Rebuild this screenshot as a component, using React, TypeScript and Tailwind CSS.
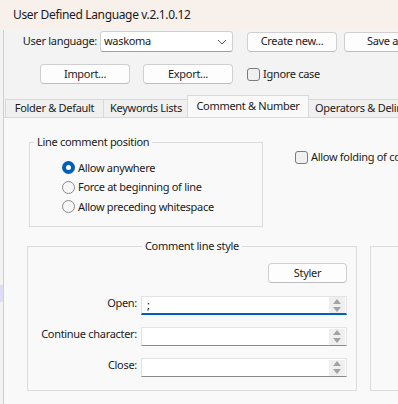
const Button = ({ label, className = "" }: { label: string; className?: string }) => (
  <div
    className={`h-[20px] shrink-0 rounded-[4px] border border-[#d0d0d0] border-b-[#bdbdbd] bg-[#fdfdfd] flex items-center justify-center whitespace-nowrap overflow-hidden ${className}`}
  >
    {label}
  </div>
);

const Checkbox = ({ label }: { label: string }) => (
  <div className="flex items-center shrink-0 whitespace-nowrap">
    <div className="w-[13px] h-[13px] shrink-0 rounded-[3px] border border-[#7a7a7a] bg-[#f0f0f0]" />
    <span className="ml-[3px]">{label}</span>
  </div>
);

const Radio = ({ label, checked = false }: { label: string; checked?: boolean }) => (
  <div className="h-[19.5px] flex items-center whitespace-nowrap">
    {checked ? (
      <div className="w-[13px] h-[13px] rounded-full bg-[#005fb8] flex items-center justify-center">
        <div className="w-[5px] h-[5px] rounded-full bg-white" />
      </div>
    ) : (
      <div className="w-[13px] h-[13px] rounded-full border border-[#8a8a8a] bg-[#f6f6f6]" />
    )}
    <span className="ml-[3px]">{label}</span>
  </div>
);

const Spin = () => (
  <div className="w-[16px] h-[16px] mr-[1px] bg-[#efefef] flex flex-col items-center justify-center gap-[3px]">
    <svg width="8" height="5" viewBox="0 0 8 5">
      <path d="M4 0 L8 5 L0 5 Z" fill="#a3a3a3" />
    </svg>
    <svg width="8" height="5" viewBox="0 0 8 5">
      <path d="M0 0 L8 0 L4 5 Z" fill="#a3a3a3" />
    </svg>
  </div>
);

const Field = ({ label, value = "", focused = false }: { label: string; value?: string; focused?: boolean }) => (
  <div className="flex items-center">
    <span className="w-[113px] pr-[4px] text-right whitespace-nowrap -mt-[5px]">{label}</span>
    <div
      className={`w-[206px] h-[19px] bg-white border border-[#e3e3e3] flex items-center ${
        focused ? "border-b-2 border-b-[#005fb8]" : "border-b-[#8a8a8a]"
      }`}
    >
      <span className="flex-1 pl-[5px] text-black">{value}</span>
      <Spin />
    </div>
  </div>
);

const Tab = ({ label, active = false, className = "" }: { label: string; active?: boolean; className?: string }) => (
  <div
    className={
      active
        ? `h-[22px] -mx-[2px] border border-b-0 border-[#d9d9d9] bg-[#f9f9f9] flex items-center justify-center relative z-10 whitespace-nowrap ${className}`
        : `h-[18px] border border-b-0 border-[#d9d9d9] bg-[#f0f0f0] flex items-center justify-center whitespace-nowrap ${className}`
    }
  >
    {label}
  </div>
);

export default function App() {
  return (
    <div className="w-[398px] h-[404px] overflow-hidden bg-[#f3f3f3] font-['Noto_Sans',sans-serif] text-[11px] tracking-[-0.3px] text-[#1b1b1b] flex flex-col">
      <div className="h-[30px] shrink-0 bg-[#f8f0eb] flex items-center pl-[13px] text-[12px] tracking-[-0.35px] whitespace-nowrap">
        User Defined Language v.2.1.0.12
      </div>

      <div className="flex flex-1">
        <div className="w-[3px] shrink-0 flex flex-col">
          <div className="h-[255px]" />
          <div className="h-[17px] bg-[#dcdcf2]" />
        </div>

        <div className="flex-1 border-l border-[#cfcfcf] flex flex-col">
          <div className="flex items-center mt-[1px] h-[21px] whitespace-nowrap">
            <span className="w-[93px] text-right">User language:</span>
            <div className="ml-[3px] w-[133px] h-[21px] shrink-0 bg-white border border-[#d0d0d0] border-b-[#a0a0a0] rounded-[3px] flex items-center justify-between pl-[3px] pr-[5px]">
              <span>waskoma</span>
              <svg width="10" height="6" viewBox="0 0 10 6">
                <path d="M1 1 L5 5 L9 1" fill="none" stroke="#555" strokeWidth="1" />
              </svg>
            </div>
            <Button label="Create new..." className="ml-[14px] w-[90px]" />
            <Button label="Save as..." className="ml-[7px] w-[90px]" />
          </div>

          <div className="flex items-center mt-[12px] h-[20px]">
            <Button label="Import..." className="ml-[36px] w-[90px]" />
            <Button label="Export..." className="ml-[13px] w-[90px]" />
            <div className="ml-[14px]">
              <Checkbox label="Ignore case" />
            </div>
          </div>

          <div className="flex items-end mt-[12px] h-[21px] pl-[1px]">
            <Tab label="Folder & Default" className="w-[99px] shrink-0" />
            <Tab label="Keywords Lists" className="w-[86px] shrink-0 -ml-[1px]" />
            <Tab label="Comment & Number" active className="w-[122px] shrink-0" />
            <Tab label="Operators & Delimiters" className="w-[130px] shrink-0 -ml-[1px] !justify-start pl-[8px]" />
          </div>

          <div className="flex-1 bg-[#f9f9f9] border-t border-[#d9d9d9] flex flex-col">
            <div className="flex items-start mt-[24px]">
              <div className="ml-[25px] w-[234px] h-[85px] shrink-0 border border-[#dcdcdc] relative pt-[15px] pl-[32px]">
                <span className="absolute -top-[9px] left-[4px] px-[3px] bg-[#f9f9f9] whitespace-nowrap">
                  Line comment position
                </span>
                <Radio label="Allow anywhere" checked />
                <Radio label="Force at beginning of line" />
                <Radio label="Allow preceding whitespace" />
              </div>
              <div className="ml-[32px] mt-[7px]">
                <Checkbox label="Allow folding of comments" />
              </div>
            </div>

            <div className="flex items-start mt-[19px]">
              <div className="ml-[23px] w-[330px] h-[145px] shrink-0 border border-[#dcdcdc] relative pt-[16px] pr-[9px] flex flex-col">
                <span className="absolute -top-[9px] left-0 right-0 flex justify-center">
                  <span className="px-[3px] bg-[#f9f9f9] whitespace-nowrap">Comment line style</span>
                </span>
                <div className="flex justify-end">
                  <Button label="Styler" className="w-[79px]" />
                </div>
                <div className="flex flex-col gap-[12px] mt-[13px]">
                  <Field label="Open:" value=";" focused />
                  <Field label="Continue character:" />
                  <Field label="Close:" />
                </div>
              </div>
              <div className="ml-[13px] w-[60px] h-[145px] shrink-0 border border-[#dcdcdc]" />
            </div>
          </div>
        </div>
      </div>
    </div>
  );
}
